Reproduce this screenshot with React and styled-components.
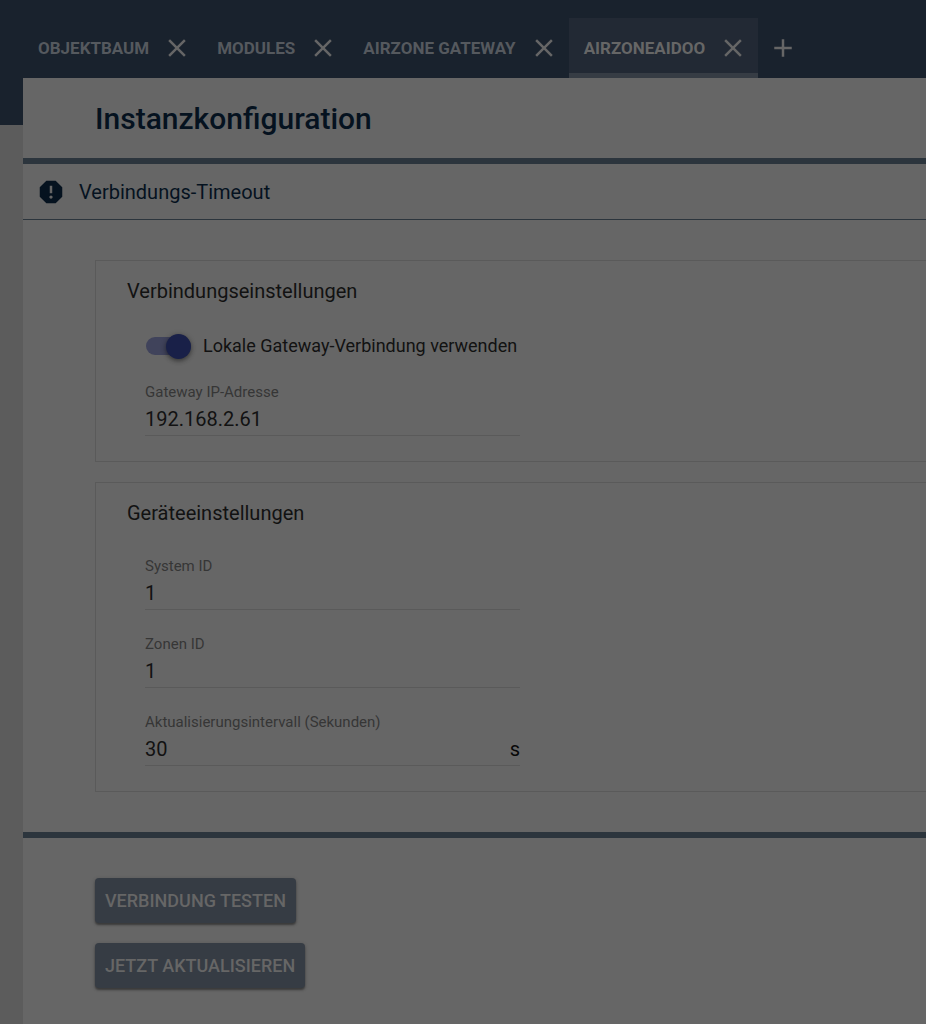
import React, { useId, useState } from "react";
import styled, { createGlobalStyle } from "styled-components";

const color = {
  header: "#19222d",
  tabActive: "#222934",
  ink: "#363c44",
  page: "#5c5c5c",
  surface: "#666666",
  rule: "#2c353d",
  navy: "#05121f",
  text: "#121212",
  hint: "#363636",
  line: "#5a5a5a",
};

const GlobalStyle = createGlobalStyle`
  *, *::before, *::after { box-sizing: border-box; }
  body {
    margin: 0;
    background: ${color.page};
    font-family: Roboto, "Liberation Sans", sans-serif;
    font-size: 20px;
    line-height: 24px;
    color: ${color.text};
  }
  button, input { font: inherit; color: inherit; }
`;

const Page = styled.div`
  display: flex;
  flex-direction: column;
  min-height: 100vh;
  padding-left: 23px;
  background: linear-gradient(${color.header} 125px, ${color.page} 125px);
`;

const TabBar = styled.nav`
  display: flex;
  align-items: center;
  padding-top: 18px;
  overflow: hidden;
`;

const Tab = styled.div`
  display: flex;
  align-items: center;
  flex: none;
  gap: 13px;
  height: 60px;
  padding: 5px 10px 0 15px;
  border-bottom: 5px solid ${(p) => (p.$active ? color.ink : "transparent")};
  background: ${(p) => (p.$active ? color.tabActive : "transparent")};
  color: ${(p) => (p.$active ? "#666666" : "#55595e")};
`;

const TabLabel = styled.button`
  padding: 0;
  border: 0;
  background: none;
  font-size: 17px;
  font-weight: 700;
  white-space: nowrap;
  text-transform: uppercase;
  cursor: pointer;
`;

const IconButton = styled.button`
  display: flex;
  flex: none;
  padding: 0;
  border: 0;
  background: none;
  color: #666666;
  cursor: pointer;
`;

const AddButton = styled(IconButton)`
  margin-left: 10px;
`;

const Content = styled.main`
  flex: 1;
  background: ${color.surface};
`;

const TitleBar = styled.header`
  display: flex;
  align-items: center;
  height: 86px;
  padding: 2px 72px 0;
  border-bottom: 6px solid ${color.rule};
`;

const Title = styled.h1`
  margin: 0;
  font-size: 30px;
  line-height: 36px;
  font-weight: 500;
  color: ${color.navy};
`;

const StatusBar = styled.div`
  display: flex;
  align-items: center;
  gap: 13px;
  height: 56px;
  padding: 0 13px;
  border-bottom: 1px solid ${color.rule};
  color: ${color.navy};
`;

const Form = styled.form`
  display: flex;
  flex-direction: column;
  gap: 20px;
  padding: 40px 0 40px 72px;
`;

const Panel = styled.section`
  padding: 18px 31px 25px;
  border: 1px solid ${color.line};
  border-right: 0;
`;

const PanelTitle = styled.h2`
  margin: 0;
  font-size: 20px;
  line-height: 24px;
  font-weight: 400;
`;

const Fields = styled.div`
  display: flex;
  flex-direction: column;
  gap: 24px;
  padding: 31px 18px 0;
`;

const ToggleLabel = styled.label`
  display: flex;
  align-items: center;
  gap: 12px;
  font-size: 18px;
  cursor: pointer;
`;

const Toggle = styled.input`
  appearance: none;
  display: flex;
  align-items: center;
  flex: none;
  width: 45px;
  height: 18px;
  margin: 0 0 0 1px;
  border-radius: 9px;
  background: #40435b;
  cursor: pointer;

  &::before {
    content: "";
    width: 25px;
    height: 25px;
    border-radius: 50%;
    background: #192048;
    box-shadow: 0 2px 4px rgba(0, 0, 0, 0.35), 0 1px 6px rgba(0, 0, 0, 0.2);
  }

  &:checked::before {
    margin-left: auto;
  }
`;

const FieldBox = styled.div`
  width: 375px;
  max-width: 100%;
  border-bottom: 1px solid ${color.line};
`;

const FieldLabel = styled.label`
  display: block;
  font-size: 15px;
  line-height: 20px;
  color: ${color.hint};
`;

const FieldRow = styled.div`
  display: flex;
  align-items: center;
  height: 33px;
  color: #080808;
`;

const FieldInput = styled.input`
  flex: 1;
  min-width: 0;
  padding: 0;
  border: 0;
  outline: 0;
  background: none;
  color: ${color.text};
`;

const Actions = styled.div`
  display: flex;
  flex-direction: column;
  align-items: flex-start;
  gap: 20px;
  padding: 40px 72px 35px;
  border-top: 6px solid ${color.rule};
`;

const ActionButton = styled.button`
  height: 45px;
  padding: 0 10px;
  border: 0;
  border-radius: 4px;
  background: ${color.ink};
  color: #666666;
  font-size: 18px;
  font-weight: 500;
  text-transform: uppercase;
  box-shadow: 0 2px 2px rgba(0, 0, 0, 0.35), 0 1px 4px rgba(0, 0, 0, 0.2);
  cursor: pointer;
`;

function Icon({ path, size = 30 }) {
  return (
    <svg width={size} height={size} viewBox="0 0 24 24" fill="currentColor" aria-hidden="true">
      <path d={path} />
    </svg>
  );
}

const closePath =
  "M19 6.41L17.59 5 12 10.59 6.41 5 5 6.41 10.59 12 5 17.59 6.41 19 12 13.41 17.59 19 19 17.59 13.41 12z";
const addPath = "M19 13h-6v6h-2v-6H5v-2h6V5h2v6h6z";
const reportPath =
  "M15.73 3H8.27L3 8.27v7.46L8.27 21h7.46L21 15.73V8.27L15.73 3zM12 17.3c-.72 0-1.3-.58-1.3-1.3s.58-1.3 1.3-1.3 1.3.58 1.3 1.3-.58 1.3-1.3 1.3zm1-4.3h-2V7h2v6z";

function Field({ label, initial, suffix }) {
  const id = useId();
  const [value, setValue] = useState(initial);
  return (
    <FieldBox>
      <FieldLabel htmlFor={id}>{label}</FieldLabel>
      <FieldRow>
        <FieldInput id={id} value={value} onChange={(e) => setValue(e.target.value)} />
        {suffix && <span>{suffix}</span>}
      </FieldRow>
    </FieldBox>
  );
}

const tabs = ["Objektbaum", "Modules", "Airzone Gateway", "AirzoneAidoo"];

export default function App() {
  const [active, setActive] = useState(3);
  const [local, setLocal] = useState(true);
  return (
    <>
      <GlobalStyle />
      <Page>
        <TabBar>
          {tabs.map((name, i) => (
            <Tab key={name} $active={i === active}>
              <TabLabel onClick={() => setActive(i)}>{name}</TabLabel>
              <IconButton aria-label={`${name} schließen`}>
                <Icon path={closePath} />
              </IconButton>
            </Tab>
          ))}
          <AddButton aria-label="Neuer Tab">
            <Icon path={addPath} />
          </AddButton>
        </TabBar>
        <Content>
          <TitleBar>
            <Title>Instanzkonfiguration</Title>
          </TitleBar>
          <StatusBar role="status">
            <Icon path={reportPath} />
            <span>Verbindungs-Timeout</span>
          </StatusBar>
          <Form onSubmit={(e) => e.preventDefault()}>
            <Panel>
              <PanelTitle>Verbindungseinstellungen</PanelTitle>
              <Fields>
                <ToggleLabel>
                  <Toggle
                    type="checkbox"
                    role="switch"
                    checked={local}
                    onChange={(e) => setLocal(e.target.checked)}
                  />
                  Lokale Gateway-Verbindung verwenden
                </ToggleLabel>
                <Field label="Gateway IP-Adresse" initial="192.168.2.61" />
              </Fields>
            </Panel>
            <Panel>
              <PanelTitle>Geräteeinstellungen</PanelTitle>
              <Fields>
                <Field label="System ID" initial="1" />
                <Field label="Zonen ID" initial="1" />
                <Field label="Aktualisierungsintervall (Sekunden)" initial="30" suffix="s" />
              </Fields>
            </Panel>
          </Form>
          <Actions>
            <ActionButton type="button">Verbindung testen</ActionButton>
            <ActionButton type="button">Jetzt aktualisieren</ActionButton>
          </Actions>
        </Content>
      </Page>
    </>
  );
}
